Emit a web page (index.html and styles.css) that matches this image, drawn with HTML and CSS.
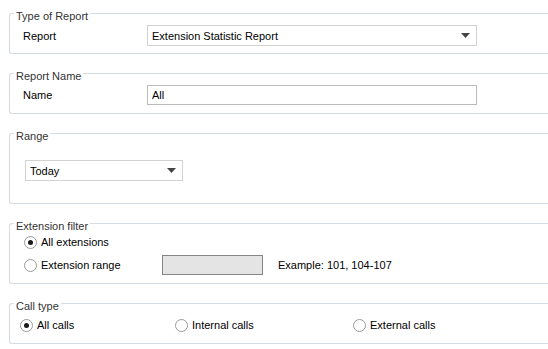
FILE: index.html
```html
<!DOCTYPE html>
<html lang="en">
<head>
  <meta charset="UTF-8" />
  <title>Report Settings</title>
  <link rel="stylesheet" href="styles.css">
</head>
<body>

  <fieldset class="group group-type">
    <legend>Type of Report</legend>
    <div class="field-row">
      <div class="field-label">Report</div>
      <div class="select wide">
        <span>Extension Statistic Report</span>
        <svg class="arrow" width="9" height="5" viewBox="0 0 9 5"><polygon points="0,0 9,0 4.5,5" /></svg>
      </div>
    </div>
  </fieldset>

  <fieldset class="group group-name">
    <legend>Report Name</legend>
    <div class="field-row">
      <div class="field-label">Name</div>
      <input class="text-input" type="text" value="All">
    </div>
  </fieldset>

  <fieldset class="group group-range">
    <legend>Range</legend>
    <div class="select narrow">
      <span>Today</span>
      <svg class="arrow" width="9" height="5" viewBox="0 0 9 5"><polygon points="0,0 9,0 4.5,5" /></svg>
    </div>
  </fieldset>

  <fieldset class="group group-filter">
    <legend>Extension filter</legend>
    <div class="option-row first">
      <span class="radio checked"></span>
      <span>All extensions</span>
    </div>
    <div class="option-row second">
      <div class="option range-option">
        <span class="radio"></span>
        <span>Extension range</span>
      </div>
      <div class="range-input"></div>
      <span class="hint">Example: 101, 104-107</span>
    </div>
  </fieldset>

  <fieldset class="group group-calls">
    <legend>Call type</legend>
    <div class="option-row">
      <div class="option call-all">
        <span class="radio checked"></span>
        <span>All calls</span>
      </div>
      <div class="option call-internal">
        <span class="radio"></span>
        <span>Internal calls</span>
      </div>
      <div class="option">
        <span class="radio"></span>
        <span>External calls</span>
      </div>
    </div>
  </fieldset>

</body>
</html>
```

FILE: styles.css
```css
body {
  margin: 0;
  padding-top: 4px;
  overflow: hidden;
  font-family: "Liberation Sans", Arial, sans-serif;
  font-size: 11px;
  color: #000;
  background: #fff;
}

.group {
  margin: 0 0 10px 9px;
  padding: 0 0 0 4px;
  min-width: 0;
  border: 1px solid #d5dce3;
  border-right: none;
  border-radius: 3px 0 0 3px;
}

.group legend {
  padding: 6px 2px 0;
  line-height: 13px;
  color: #333;
}

.field-row {
  display: flex;
  align-items: center;
  padding-left: 9px;
}

.field-label {
  width: 124px;
}

.group-type {
  padding-top: 2px;
  padding-bottom: 7px;
}

.group-name {
  padding-top: 2px;
  padding-bottom: 8px;
}

.group-range {
  padding-top: 17px;
  padding-bottom: 22px;
}

.group-filter {
  padding-bottom: 8px;
}

.group-calls {
  padding-top: 3px;
  padding-bottom: 9px;
}

.select {
  display: flex;
  align-items: center;
  box-sizing: border-box;
  height: 21px;
  padding-left: 4px;
  border: 1px solid #d2d2d2;
  background: #fff;
}

.select .arrow {
  margin-left: auto;
  margin-right: 6px;
  fill: #444;
}

.select.wide {
  width: 330px;
}

.select.narrow {
  width: 158px;
  margin-left: 11px;
}

.text-input {
  box-sizing: border-box;
  width: 330px;
  height: 20px;
  margin: 0;
  padding: 0 4px;
  border: 1px solid #bcbcbc;
  font-family: inherit;
  font-size: 11px;
  color: #000;
  outline: none;
}

.option-row {
  display: flex;
  align-items: center;
  height: 18px;
}

.group-filter .option-row {
  padding-left: 10px;
}

.group-filter .option-row.second {
  height: 20px;
  margin-top: 4px;
}

.group-calls .option-row {
  padding-left: 6px;
}

.option {
  display: flex;
  align-items: center;
}

.range-option {
  width: 138px;
}

.call-all {
  width: 155px;
}

.call-internal {
  width: 178px;
}

.radio {
  display: flex;
  align-items: center;
  justify-content: center;
  box-sizing: border-box;
  width: 13px;
  height: 13px;
  margin-right: 4px;
  border: 1px solid #9a9a9a;
  border-radius: 50%;
  background: #fff;
}

.radio.checked::after {
  content: "";
  width: 5px;
  height: 5px;
  border-radius: 50%;
  background: #1a1a1a;
}

.range-input {
  box-sizing: border-box;
  width: 101px;
  height: 20px;
  border: 1px solid #858585;
  background: #e4e4e4;
}

.hint {
  margin-left: 15px;
}
```
